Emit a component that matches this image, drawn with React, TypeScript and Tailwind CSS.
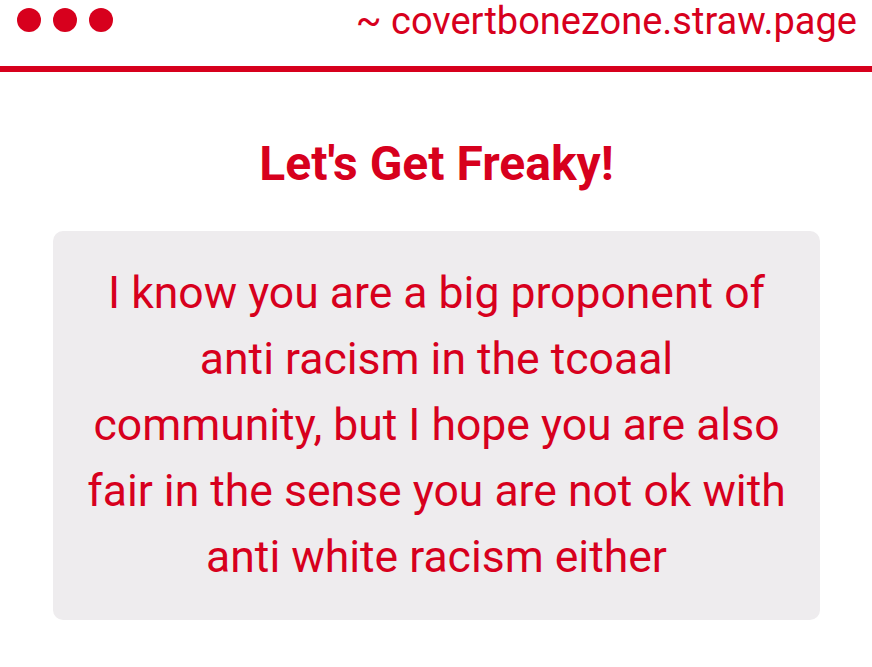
export default function App() {
  return (
    <div className="min-h-[667px] bg-white text-[#d7001d]" style={{ fontFamily: "Roboto, 'Noto Sans', sans-serif" }}>
      <header className="flex h-[66px] items-start justify-between pl-[17px] pr-[15px]">
        <div className="flex gap-[12px] pt-[8px]">
          <span className="h-[24px] w-[24px] rounded-full bg-[#d7001d]" />
          <span className="h-[24px] w-[24px] rounded-full bg-[#d7001d]" />
          <span className="h-[24px] w-[24px] rounded-full bg-[#d7001d]" />
        </div>
        <div className="pt-[1px] text-[38px] leading-[40px]">~ covertbonezone.straw.page</div>
      </header>
      <div className="h-[6px] bg-[#d7001d]" />
      <main className="pl-[53px] pr-[52px] pt-[64px]">
        <h1 className="text-center text-[48px] font-bold leading-[56px]">Let's Get Freaky!</h1>
        <div className="mt-[39px] rounded-[10px] bg-[#eeecee] px-[31px] pt-[29px] pb-[30px]">
          <p className="text-center text-[44.5px] leading-[66px]">
            I know you are a big proponent of anti racism in the tcoaal community, but I hope you are also fair in the sense you are not ok with anti white racism either
          </p>
        </div>
      </main>
    </div>
  );
}
